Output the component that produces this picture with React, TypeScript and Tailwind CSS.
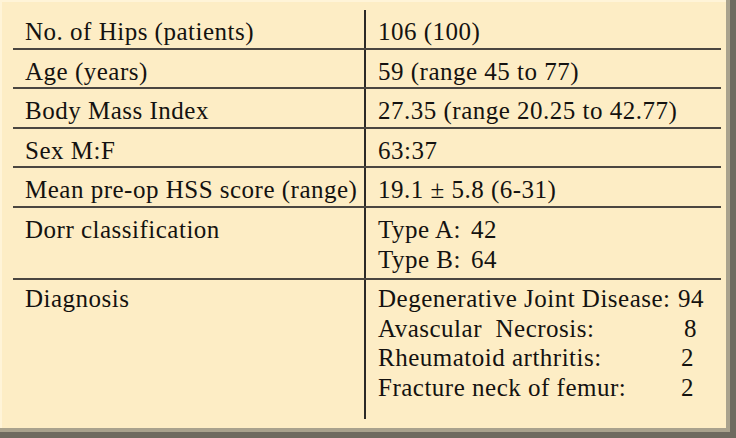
import React from "react";

const rows: { label: string; h: string; value: React.ReactNode }[] = [
  { label: "No. of Hips (patients)", h: "h-[40px]", value: "106 (100)" },
  { label: "Age (years)", h: "h-[39px]", value: "59 (range 45 to 77)" },
  { label: "Body Mass Index", h: "h-[40px]", value: "27.35 (range 20.25 to 42.77)" },
  { label: "Sex M:F", h: "h-[39px]", value: "63:37" },
  { label: "Mean pre-op HSS score (range)", h: "h-[40px]", value: "19.1 ± 5.8 (6-31)" },
  {
    label: "Dorr classification",
    h: "h-[72px]",
    value: (
      <div className="flex flex-col">
        <div className="flex gap-[10px]">
          <span>Type A:</span>
          <span>42</span>
        </div>
        <div className="flex gap-[10px]">
          <span>Type B:</span>
          <span>64</span>
        </div>
      </div>
    ),
  },
];

const diagnosis = [
  { name: "Degenerative Joint Disease:", n: "94", pad: "pl-0" },
  { name: "Avascular  Necrosis:", n: "8", pad: "pl-[6px]" },
  { name: "Rheumatoid arthritis:", n: "2", pad: "pl-[3px]" },
  { name: "Fracture neck of femur:", n: "2", pad: "pl-[3px]" },
];

export default function App() {
  return (
    <div
      className="w-[736px] h-[438px] bg-[#fdedc5] text-[#141210] text-[25px] leading-[30px] tracking-[0.5px] pl-[13px] pt-[10px] pr-[15px] shadow-[inset_-6px_-6px_0_#6e6a5f,inset_-10px_-10px_0_#a9a28d,inset_2px_2px_0_#fff4d8]"
      style={{ fontFamily: '"Liberation Serif", "Times New Roman", serif' }}
    >
      {/* table */}
      <div className="flex flex-col">
        {rows.map((r) => (
          <div key={r.label} className={`flex border-b-2 border-[#4a4640] ${r.h}`}>
            <div className="w-[353px] border-r-2 border-[#2c2a27] pl-[12px] pt-[7px] whitespace-nowrap">{r.label}</div>
            <div className="flex-1 pl-[12px] pt-[7px] whitespace-nowrap">{r.value}</div>
          </div>
        ))}
        <div className="flex h-[139px]">
          <div className="w-[353px] border-r-2 border-[#2c2a27] pl-[12px] pt-[4px]">Diagnosis</div>
          <div className="flex-1 pl-[12px] pt-[4px] flex flex-col leading-[29.5px]">
            {diagnosis.map((d) => (
              <div key={d.name} className="flex">
                <span className="w-[300px] whitespace-pre">{d.name}</span>
                <span className={d.pad}>{d.n}</span>
              </div>
            ))}
          </div>
        </div>
      </div>
    </div>
  );
}
